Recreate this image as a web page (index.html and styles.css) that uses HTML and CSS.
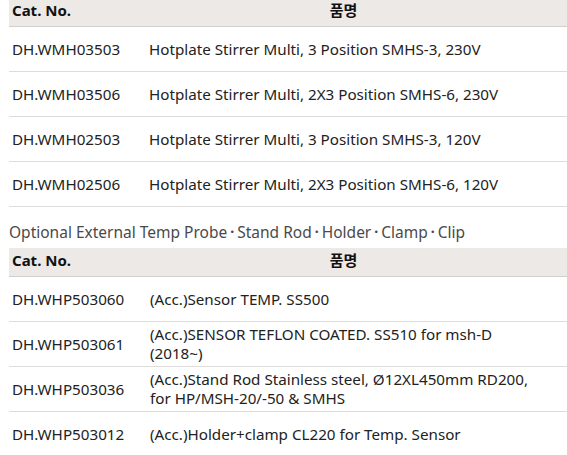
FILE: index.html
```html
<!DOCTYPE html>
<html lang="ko">
<head>
<meta charset="utf-8">
<link rel="stylesheet" href="styles.css">
</head>
<body>
<div class="page">
  <table class="spec first">
    <thead>
      <tr><th class="c1">Cat. No.</th><th class="c2">품명</th></tr>
    </thead>
    <tbody>
      <tr><td>DH.WMH03503</td><td>Hotplate Stirrer Multi, 3 Position SMHS-3, 230V</td></tr>
      <tr><td>DH.WMH03506</td><td>Hotplate Stirrer Multi, 2X3 Position SMHS-6, 230V</td></tr>
      <tr><td>DH.WMH02503</td><td>Hotplate Stirrer Multi, 3 Position SMHS-3, 120V</td></tr>
      <tr><td>DH.WMH02506</td><td>Hotplate Stirrer Multi, 2X3 Position SMHS-6, 120V</td></tr>
    </tbody>
  </table>
  <h3 class="section-title">Optional External Temp Probe<span class="sep">・</span>Stand Rod<span class="sep">・</span>Holder<span class="sep">・</span>Clamp<span class="sep">・</span>Clip</h3>
  <table class="spec second">
    <thead>
      <tr><th class="c1">Cat. No.</th><th class="c2">품명</th></tr>
    </thead>
    <tbody>
      <tr><td>DH.WHP503060</td><td>(Acc.)Sensor TEMP. SS500</td></tr>
      <tr><td>DH.WHP503061</td><td>(Acc.)SENSOR TEFLON COATED. SS510 for msh-D (2018~)</td></tr>
      <tr><td>DH.WHP503036</td><td>(Acc.)Stand Rod Stainless steel, Ø12XL450mm RD200, for HP/MSH-20/-50 &amp; SMHS</td></tr>
      <tr><td>DH.WHP503012</td><td>(Acc.)Holder+clamp CL220 for Temp. Sensor</td></tr>
    </tbody>
  </table>
</div>
</body>
</html>
```
FILE: styles.css
```css
html, body {
  margin: 0;
  padding: 0;
  background: #ffffff;
}
body {
  font-family: "Noto Sans", "Noto Sans CJK KR", sans-serif;
  color: #222222;
  font-size: 15.2px;
}
.page {
  padding-left: 9px;
  margin-top: -2px;
}
.spec {
  width: 558px;
  border-collapse: collapse;
  table-layout: fixed;
}
.spec th {
  background: #ece9e6;
  height: 25px;
  padding: 0 3px 3px 3px;
  font-weight: bold;
  font-size: 15px;
  color: #111111;
  border-bottom: 1px solid #d2d0ce;
  text-align: left;
  vertical-align: middle;
  line-height: 19px;
}
.spec th.c1 {
  width: 131px;
}
.spec th.c2 {
  text-align: center;
  padding-right: 29px;
}
.spec td {
  height: 44px;
  padding: 0 3px;
  border-bottom: 1px solid #dcdcdc;
  vertical-align: middle;
  line-height: 19px;
}
.spec td:last-child {
  padding-left: 3px;
  padding-right: 29px;
}
.second td:last-child {
  padding-left: 4px;
}
.section-title {
  margin: 0;
  padding: 14px 0 5px 0;
  font-size: 15.5px;
  font-weight: normal;
  color: #4a4a4a;
  line-height: 22px;
}
.sep {
  font-size: 10px;
  vertical-align: 2px;
  font-weight: bold;
}
```
